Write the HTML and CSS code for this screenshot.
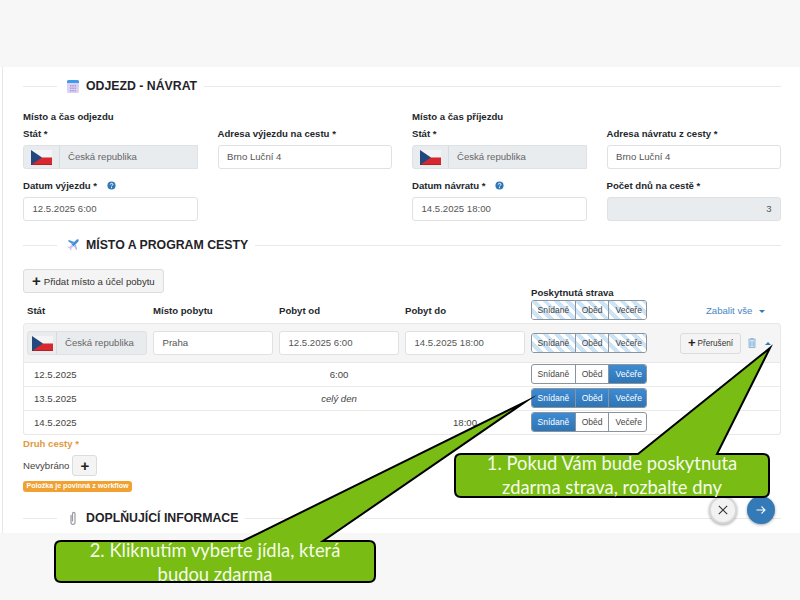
FILE: index.html
```html
<!DOCTYPE html>
<html lang="cs">
<head>
<meta charset="utf-8">
<title>Odjezd - návrat</title>
<link rel="stylesheet" href="styles.css">
</head>
<body>
<svg class="defs" width="0" height="0" aria-hidden="true">
  <symbol id="flag" viewBox="0 0 21 15">
    <rect width="21" height="7.5" fill="#f4f4f6"/>
    <rect y="7.5" width="21" height="7.5" fill="#d7282f"/>
    <path d="M0 0L11 7.5L0 15Z" fill="#24477e"/>
    <rect y="14" width="21" height="1" fill="#000" opacity=".18"/>
  </symbol>
  <symbol id="help" viewBox="0 0 10 10">
    <circle cx="5" cy="5" r="4.5" fill="#2f76b5"/>
    <path d="M3.5 3.9C3.6 2.2 6.6 2.2 6.6 3.8C6.6 5 5 4.8 5 6" fill="none" stroke="#fff" stroke-width="1.1"/>
    <rect x="4.4" y="6.8" width="1.2" height="1.2" fill="#fff"/>
  </symbol>
</svg>

<main class="page">
  <div class="sheet">
    <div class="content">

      <h2 class="section-title">
        <span class="rule-short"></span>
        <svg class="section-icon" width="12" height="14" viewBox="0 0 12 14">
          <rect x="0" y="1" width="12" height="13" rx="1.5" fill="#dcd3f3"/>
          <path d="M0 4V2.5A1.5 1.5 0 0 1 1.500 1H10.500A1.500 1.500 0 0 1 12 2.500V4Z" fill="#3e9bee"/>
          <path d="M3 6h1.500v1.500H3zM5.300 6h1.500v1.500H5.300zM7.600 6h1.500v1.500H7.600zM3 8.500h1.500V10H3zM5.300 8.500h1.500V10H5.300zM7.600 8.500h1.500V10H7.600zM3 11h1.500v1.500H3zM5.300 11h1.500v1.500H5.300zM7.600 11h1.500v1.500H7.600z" fill="#a99bd6"/>
        </svg>
        <span class="section-text">ODJEZD - NÁVRAT</span>
        <span class="rule-long"></span>
      </h2>

      <div class="form-grid">
        <div class="subhead subhead-a">Místo a čas odjezdu</div>
        <div class="subhead subhead-b">Místo a čas příjezdu</div>

        <div class="field">
          <div class="label">Stát *</div>
          <div class="country"><span class="country-addon"><svg class="flag"><use href="#flag"/></svg></span><span class="country-name">Česká republika</span></div>
        </div>
        <div class="field">
          <div class="label">Adresa výjezdu na cestu *</div>
          <div class="input">Brno Luční 4</div>
        </div>
        <div class="field">
          <div class="label">Stát *</div>
          <div class="country"><span class="country-addon"><svg class="flag"><use href="#flag"/></svg></span><span class="country-name">Česká republika</span></div>
        </div>
        <div class="field">
          <div class="label">Adresa návratu z cesty *</div>
          <div class="input">Brno Luční 4</div>
        </div>

        <div class="field">
          <div class="label">Datum výjezdu * <svg class="help"><use href="#help"/></svg></div>
          <div class="input">12.5.2025 6:00</div>
        </div>
        <div class="field"></div>
        <div class="field">
          <div class="label">Datum návratu * <svg class="help"><use href="#help"/></svg></div>
          <div class="input">14.5.2025 18:00</div>
        </div>
        <div class="field">
          <div class="label">Počet dnů na cestě *</div>
          <div class="input input-disabled">3</div>
        </div>
      </div>

      <h2 class="section-title section-second">
        <span class="rule-short"></span>
        <svg class="section-icon" width="12" height="12" viewBox="0 0 13 13">
          <path d="M5.500 5.500L1 2.200L2.200 1L8 3.200Z" fill="#4d94d8"/>
          <path d="M12.500.5C11.500 0 10.500.6 9.500 1.600L5 6L7 8L11.500 3.500C12.500 2.500 13 1.500 12.500.5Z" fill="#3f8fd8"/>
          <path d="M5 6L2.800 8.300L1 8L.5 8.800L2.800 10.200L4.200 12.500L5 12L4.700 10.200L7 8Z" fill="#cfc6ec"/>
          <path d="M7.500 7.500L10 12L11 11L9.500 5.500Z" fill="#b9b2e6"/>
        </svg>
        <span class="section-text">MÍSTO A PROGRAM CESTY</span>
        <span class="rule-long"></span>
      </h2>

      <button class="btn btn-add" type="button"><span class="plus">+</span>Přidat místo a účel pobytu</button>

      <div class="trip-grid trip-head">
        <div class="head-cell">Stát</div>
        <div class="head-cell">Místo pobytu</div>
        <div class="head-cell">Pobyt od</div>
        <div class="head-cell">Pobyt do</div>
        <div class="head-meals">
          <div class="head-meals-label">Poskytnutá strava</div>
          <div class="meals">
            <span class="meal meal-striped">Snídaně</span><span class="meal meal-striped">Oběd</span><span class="meal meal-striped">Večeře</span>
          </div>
        </div>
        <div class="collapse-all">Zabalit vše <span class="caret-down"></span></div>
      </div>

      <div class="trip-grid trip-band">
        <div class="country country-small"><span class="country-addon"><svg class="flag"><use href="#flag"/></svg></span><span class="country-name">Česká republika</span></div>
        <div class="input">Praha</div>
        <div class="input">12.5.2025 6:00</div>
        <div class="input">14.5.2025 18:00</div>
        <div class="meals">
          <span class="meal meal-striped">Snídaně</span><span class="meal meal-striped">Oběd</span><span class="meal meal-striped">Večeře</span>
        </div>
        <div class="band-actions">
          <button class="btn btn-break" type="button"><span class="plus">+</span>Přerušení</button>
          <svg class="trash" width="8" height="10" viewBox="0 0 8 10">
            <path d="M2.700 1V.4H5.300V1M.3 1.300H7.700M1 1.800V9.500H7V1.800" fill="#cfe0ef" stroke="#79a9d2" stroke-width=".8"/>
            <path d="M2.800 3.500V8M5.200 3.500V8" stroke="#79a9d2" stroke-width=".8"/>
          </svg>
          <span class="caret-up"></span>
        </div>
      </div>

      <div class="days">
        <div class="trip-grid day-row">
          <div class="day-date">12.5.2025</div>
          <div class="day-time day-time-from">6:00</div>
          <div class="meals meals-col">
            <span class="meal">Snídaně</span><span class="meal">Oběd</span><span class="meal meal-on">Večeře</span>
          </div>
        </div>
        <div class="trip-grid day-row">
          <div class="day-date">13.5.2025</div>
          <div class="day-time day-time-from day-time-all">celý den</div>
          <div class="meals meals-col">
            <span class="meal meal-on">Snídaně</span><span class="meal meal-on">Oběd</span><span class="meal meal-on">Večeře</span>
          </div>
        </div>
        <div class="trip-grid day-row">
          <div class="day-date">14.5.2025</div>
          <div class="day-time day-time-to">18:00</div>
          <div class="meals meals-col">
            <span class="meal meal-on">Snídaně</span><span class="meal">Oběd</span><span class="meal">Večeře</span>
          </div>
        </div>
      </div>

      <div class="trip-type-label">Druh cesty *</div>
      <div class="trip-type">
        <span>Nevybráno</span>
        <button class="btn btn-plus" type="button">+</button>
      </div>
      <div class="badge">Položka je povinná z workflow</div>

      <h2 class="section-title section-third">
        <span class="rule-short"></span>
        <svg class="section-icon" width="12" height="15" viewBox="0 0 12 15">
          <path d="M4 4V11.500C4 14 8 14 8 11.500V3C8 .8 5.500 .8 5.500 3V10.500" fill="none" stroke="#9a9aa0" stroke-width="1.200"/>
        </svg>
        <span class="section-text">DOPLŇUJÍCÍ INFORMACE</span>
        <span class="rule-long"></span>
      </h2>
    </div>
  </div>

  <button class="fab fab-close" type="button" aria-label="Zavřít">
    <svg width="10" height="10" viewBox="0 0 10 10"><path d="M.8.8L9.200 9.200M9.200.8L.8 9.200" stroke="#333" stroke-width="1.100"/></svg>
  </button>
  <button class="fab fab-next" type="button" aria-label="Další">
    <svg width="10" height="10" viewBox="0 0 10 10"><path d="M.5 5H9M5.500 1.500L9 5L5.500 8.500" fill="none" stroke="#fff" stroke-width="1.100"/></svg>
  </button>

  <svg class="callout-shapes" width="800" height="600" viewBox="0 0 800 600" aria-hidden="true">
    <path d="M461 454H638L770 348L717 454H763Q769 454 769 460V491Q769 497 763 497H461Q455 497 455 491V460Q455 454 461 454Z"/>
    <path d="M61 541H243L525 402L323 541H369Q375 541 375 547V576Q375 582 369 582H61Q55 582 55 576V547Q55 541 61 541Z"/>
  </svg>
  <div class="callout-text callout-one">1. Pokud Vám bude poskytnuta<br>zdarma strava, rozbalte dny</div>
  <div class="callout-text callout-two">2. Kliknutím vyberte jídla, která<br>budou zdarma</div>
</main>
</body>
</html>
```

FILE: styles.css
```css
* { box-sizing: border-box; }

html, body { margin: 0; padding: 0; }

body {
  font-family: "Liberation Sans", Arial, sans-serif;
  font-size: 9.6px;
  color: #333;
  background: #f7f7f7;
}

.defs { position: absolute; }

.page {
  position: relative;
  width: 800px;
  height: 600px;
  padding-top: 67px;
  overflow: hidden;
  background: #f7f7f7;
}

.sheet {
  height: 466px;
  padding-left: 2px;
  background: #fff;
}

.content {
  height: 466px;
  padding: 9px 19px 0 20px;
  border-left: 1px solid #e6e6e6;
}

/* Section titles */
.section-title {
  display: flex;
  align-items: center;
  height: 20px;
  margin: 0;
  font-size: 12.3px;
  font-weight: 700;
  color: #1f2329;
}

.section-second { margin-top: 4px; }
.section-third { margin-top: 16px; }

.rule-short { width: 34px; height: 1px; margin-right: 10px; background: #e9e9e9; }
.rule-long { flex: 1; height: 1px; margin-left: 7px; background: #e9e9e9; }
.section-icon { flex: none; margin-right: 7px; }
.section-text { white-space: nowrap; }

/* Form */
.form-grid {
  display: grid;
  grid-template-columns: repeat(4, 1fr);
  column-gap: 20px;
  margin-top: 14px;
}

.subhead {
  height: 14px;
  margin-bottom: 3px;
  font-size: 9.6px;
  line-height: 14px;
  font-weight: 700;
  color: #23272b;
}

.subhead-a { grid-column: 1 / 3; }
.subhead-b { grid-column: 3 / 5; }

.field { margin-bottom: 10px; }

.label {
  height: 14px;
  margin-bottom: 4px;
  line-height: 14px;
  font-weight: 700;
  color: #23272b;
  white-space: nowrap;
}

.help {
  width: 9px;
  height: 9px;
  margin-left: 7px;
  vertical-align: -1px;
}

.input {
  height: 24px;
  padding: 0 8.5px;
  border: 1px solid #dfe1e4;
  border-radius: 3px;
  background: #fff;
  line-height: 22px;
  color: #555;
  white-space: nowrap;
}

.input-disabled {
  background: #e9ecef;
  text-align: right;
}

.country {
  display: flex;
  height: 24px;
  border: 1px solid #dfe1e4;
  border-radius: 3px 0 0 3px;
  background: #e9ecef;
  line-height: 22px;
  color: #666;
}

.country-addon {
  display: flex;
  flex: none;
  align-items: center;
  justify-content: center;
  width: 36px;
  border-right: 1px solid #d8dbde;
}

.country-name { padding-left: 8px; white-space: nowrap; }
.flag { display: block; width: 21px; height: 15px; }

.country-small .country-addon { width: 29px; }

/* Buttons */
.btn {
  border: 1px solid #dcdcdc;
  border-radius: 3px;
  background: #f4f4f4;
  font-family: inherit;
  font-size: 9.6px;
  color: #333;
  cursor: pointer;
}

.btn-add {
  display: flex;
  align-items: center;
  width: 141px;
  height: 24px;
  margin-top: 14px;
  padding: 0 0 0 8px;
  white-space: nowrap;
}

.plus {
  margin-right: 3px;
  font-size: 15px;
  font-weight: 700;
  line-height: 14px;
  color: #222;
}

/* Trip table */
.trip-grid {
  display: grid;
  grid-template-columns: 120px 120px 120px 120px 116px 1fr;
  column-gap: 6px;
  padding-left: 4px;
}

.trip-head {
  align-items: end;
  height: 37px;
  margin-top: -7px;
  padding-bottom: 3px;
}

.head-cell {
  height: 14px;
  margin-bottom: 2px;
  line-height: 14px;
  font-weight: 700;
  color: #23272b;
}

.head-meals-label {
  height: 14px;
  font-weight: 700;
  line-height: 14px;
  color: #23272b;
  white-space: nowrap;
}

.collapse-all {
  height: 14px;
  margin-bottom: 2px;
  padding-right: 16px;
  line-height: 14px;
  text-align: right;
  color: #4a86c0;
  white-space: nowrap;
}

.caret-down, .caret-up {
  display: inline-block;
  width: 0;
  height: 0;
  border-left: 3.500px solid transparent;
  border-right: 3.500px solid transparent;
}

.caret-down {
  margin-left: 4px;
  border-top: 3.500px solid #337ab7;
  vertical-align: 1px;
}

.caret-up { border-bottom: 3.500px solid #337ab7; }

.trip-band {
  align-items: center;
  height: 40px;
  padding-top: 7px;
  padding-bottom: 7px;
  padding-left: 3px;
  border: 1px solid #e8e8e8;
  border-radius: 3px 3px 0 0;
  background: #f5f5f5;
}

.country-small { border-radius: 3px; }

.band-actions {
  display: flex;
  align-items: center;
  justify-content: flex-end;
  padding-right: 9px;
}

.btn-break {
  display: flex;
  align-items: center;
  width: 61px;
  height: 21px;
  margin-right: 6px;
  padding: 0 0 0 7px;
  font-size: 8.2px;
  white-space: nowrap;
}

.btn-break .plus { margin-right: 2px; font-size: 13px; }

.trash { margin: 0 9px 0 1px; }

.meals {
  display: flex;
  width: 116px;
  height: 20px;
  border: 1px solid #8a949e;
  border-radius: 3px;
  overflow: hidden;
  background: #fff;
}

.meal {
  flex: none;
  padding: 0 6px;
  border-left: 1px solid #8a949e;
  font-size: 8.500px;
  line-height: 18px;
  color: #444;
  white-space: nowrap;
}

.meal:first-child { padding: 0 5.500px; border-left: 0; }
.meal:last-child { flex: 1; }

.meal-striped {
  background: repeating-linear-gradient(45deg, #fff 0, #fff 4px, #cde3f6 4px, #cde3f6 8px);
}

.meal-on {
  background: linear-gradient(#3e8bd2, #2f75b6);
  color: #fff;
}

.days {
  border: 1px solid #e8e8e8;
  border-top: 0;
  border-radius: 0 0 3px 3px;
}

.day-row {
  align-items: center;
  height: 24px;
  padding-top: 1px;
  padding-bottom: 2px;
  padding-left: 3px;
  border-bottom: 1px solid #ebebeb;
}

.day-row:last-child { height: 23px; border-bottom: 0; }

.day-date { grid-column: 1 / 3; padding-left: 7px; color: #444; }
.day-time { text-align: center; color: #444; }
.day-time-from { grid-column: 3; }
.day-time-to { grid-column: 4; }
.day-time-all { font-style: italic; }
.meals-col { grid-column: 5; }

/* Trip type */
.trip-type-label {
  height: 14px;
  margin-top: 2px;
  font-weight: 700;
  line-height: 14px;
  color: #df9a3f;
}

.trip-type {
  display: flex;
  align-items: center;
  margin-top: 4px;
  color: #444;
}

.btn-plus {
  width: 25px;
  height: 21px;
  margin-left: 3px;
  padding: 0;
  font-size: 15px;
  font-weight: 700;
  line-height: 17px;
  color: #222;
}

.badge {
  width: 109px;
  height: 11px;
  margin-top: 5px;
  border-radius: 3px;
  background: #f0a132;
  font-size: 7.1px;
  font-weight: 700;
  line-height: 11px;
  text-align: center;
  color: #fff;
  white-space: nowrap;
}

/* Floating buttons */
.fab {
  position: absolute;
  top: 496px;
  display: flex;
  align-items: center;
  justify-content: center;
  width: 28px;
  height: 28px;
  padding: 0;
  border-radius: 50%;
  box-shadow: 0 1px 3px rgba(0, 0, 0, .35);
  cursor: pointer;
}

.fab-close { left: 709px; border: 2px solid #d8d8d8; background: #f2f2f2; }
.fab-next { left: 747px; border: 0; background: #337ab7; }

/* Callouts */
.callout-shapes {
  position: absolute;
  top: 0;
  left: 0;
  fill: #78bc14;
  stroke: #000;
  stroke-width: 2;
  stroke-miterlimit: 30;
}

.callout-text {
  position: absolute;
  font-family: Lato, "Open Sans", sans-serif;
  font-size: 18.4px;
  line-height: 23.5px;
  text-align: center;
  color: #f5fbea;
  white-space: nowrap;
}

.callout-one { top: 452px; left: 455px; width: 314px; }
.callout-two { top: 539px; left: 55px; width: 320px; }
```
